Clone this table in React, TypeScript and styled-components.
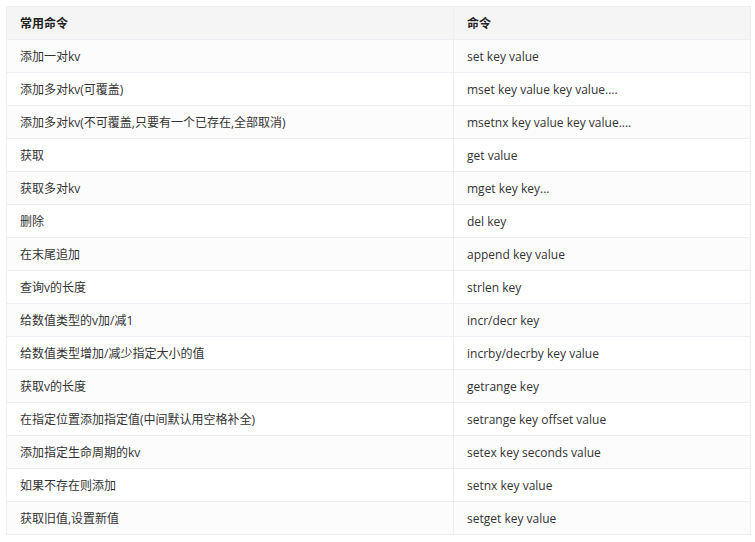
import React from "react";
import styled, { createGlobalStyle } from "styled-components";

const Global = createGlobalStyle`
  html, body { margin: 0; padding: 0; background: #ffffff; }
  body { padding: 6px; }
`;

const Table = styled.table`
  border-collapse: collapse;
  width: 744px;
  font-family: "Open Sans", "Noto Sans CJK SC", sans-serif;
  font-size: 12px;
  color: #333333;
  table-layout: fixed;
`;

const Th = styled.th`
  height: 32px;
  padding: 0 13px;
  text-align: left;
  font-weight: 700;
  background: #f5f5f6;
  border: 1px solid #eceef4;
  color: #222222;
`;

const Td = styled.td`
  height: 32px;
  padding: 0 13px;
  border: 1px solid #eceef4;
  white-space: nowrap;
`;

const Row = styled.tr<{ $alt: boolean }>`
  background: ${(p) => (p.$alt ? "#fcfcfd" : "#ffffff")};
`;

const rows: [string, string][] = [
  ["添加一对kv", "set key value"],
  ["添加多对kv(可覆盖)", "mset key value key value...."],
  ["添加多对kv(不可覆盖,只要有一个已存在,全部取消)", "msetnx key value key value...."],
  ["获取", "get value"],
  ["获取多对kv", "mget key key..."],
  ["删除", "del key"],
  ["在末尾追加", "append key value"],
  ["查询v的长度", "strlen key"],
  ["给数值类型的v加/减1", "incr/decr key"],
  ["给数值类型增加/减少指定大小的值", "incrby/decrby key value"],
  ["获取v的长度", "getrange key"],
  ["在指定位置添加指定值(中间默认用空格补全)", "setrange key offset value"],
  ["添加指定生命周期的kv", "setex key seconds value"],
  ["如果不存在则添加", "setnx key value"],
  ["获取旧值,设置新值", "setget key value"],
];

export default function App() {
  return (
    <>
      <Global />
      <Table>
        <colgroup>
          <col style={{ width: 447 }} />
          <col style={{ width: 297 }} />
        </colgroup>
        <thead>
          <tr>
            <Th>常用命令</Th>
            <Th>命令</Th>
          </tr>
        </thead>
        <tbody>
          {rows.map(([a, b], i) => (
            <Row key={i} $alt={i % 2 === 0}>
              <Td>{a}</Td>
              <Td>{b}</Td>
            </Row>
          ))}
        </tbody>
      </Table>
    </>
  );
}
